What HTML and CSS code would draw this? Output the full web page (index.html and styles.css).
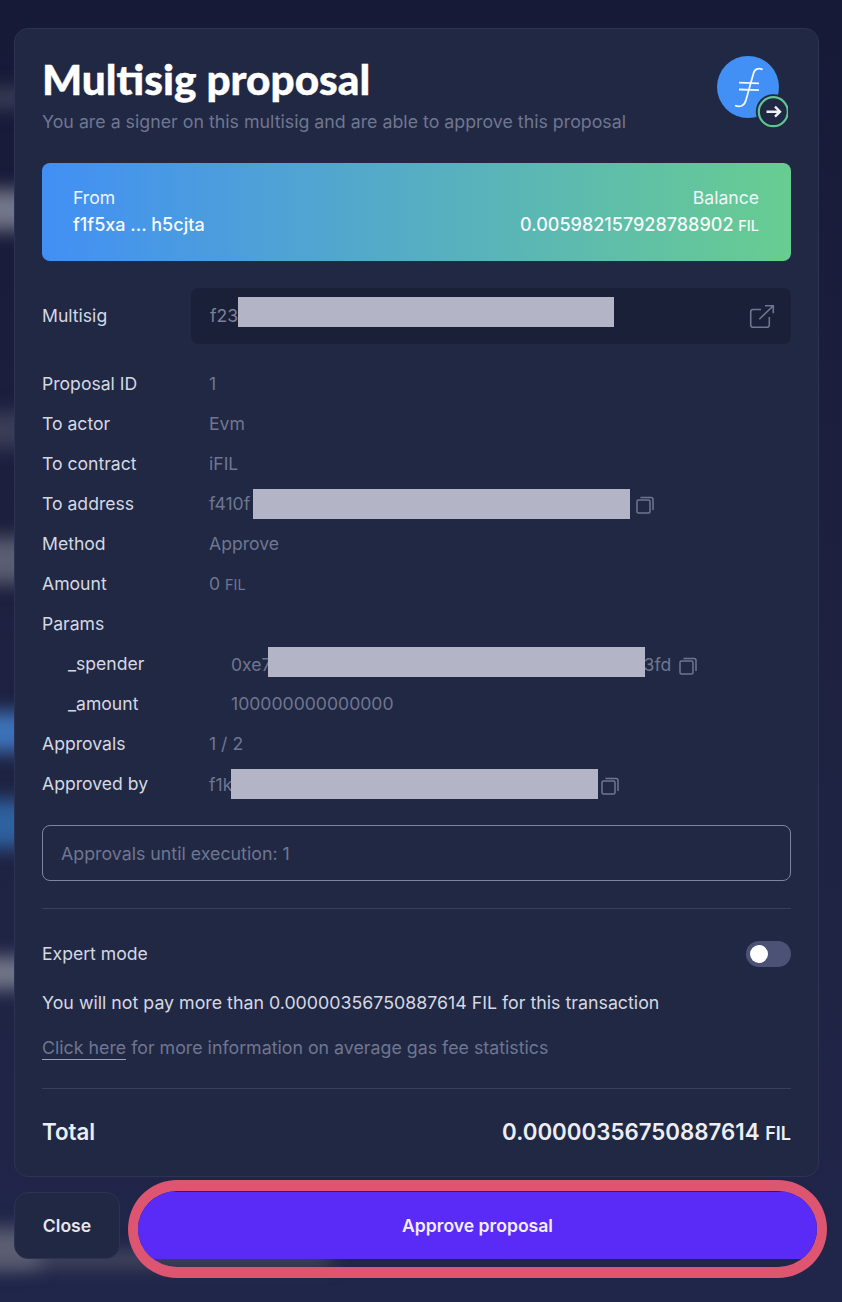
FILE: index.html
```html
<!DOCTYPE html>
<html lang="en">
<head>
    <meta charset="UTF-8">
    <meta name="viewport" content="width=device-width, initial-scale=1.0">
    <title>Multisig proposal</title>
    <link rel="stylesheet" href="styles.css">
</head>
<body>
    <div class="streak streak-a"></div>
    <div class="streak streak-b"></div>
    <div class="streak streak-c"></div>
    <div class="streak streak-d"></div>
    <div class="streak streak-e"></div>
    <div class="streak streak-f"></div>
    <div class="streak streak-g"></div>
    <div class="streak streak-h"></div>
    <div class="streak streak-i"></div>

    <main class="page">
        <section class="card">
            <header class="card-head">
                <div>
                    <h1 class="title">Multisig proposal</h1>
                    <p class="subtitle">You are a signer on this multisig and are able to approve this proposal</p>
                </div>
                <div class="logo">
                    <svg width="72" height="74" viewBox="0 0 72 74">
                        <circle cx="32" cy="31" r="31" fill="#428ff5"/>
                        <path d="M46.7 13.5C42 11.5 38.500 13 37.300 18L30 44C28.500 50 24 51.500 19 49.500" fill="none" stroke="#f2f6fd" stroke-width="1.800"/>
                        <path d="M23 26.700L43 27.300M23 33.500L43 34.200" fill="none" stroke="#f2f6fd" stroke-width="1.800"/>
                        <circle cx="57.300" cy="55.700" r="17.500" fill="#212844"/>
                        <circle cx="57.300" cy="55.700" r="14.500" fill="#212844" stroke="#5ec78f" stroke-width="2.200"/>
                        <path d="M50.500 55.700H64M59 50.700L64 55.700L59 60.700" fill="none" stroke="#eef0f6" stroke-width="2.400"/>
                    </svg>
                </div>
            </header>

            <div class="from-panel">
                <div>
                    <p class="panel-label">From</p>
                    <p class="panel-value">f1f5xa ... h5cjta</p>
                </div>
                <div class="panel-right">
                    <p class="panel-label">Balance</p>
                    <p class="panel-value">0.005982157928788902 <span class="unit">FIL</span></p>
                </div>
            </div>

            <div class="multisig-row">
                <span class="row-label">Multisig</span>
                <div class="multisig-box">
                    <span class="row-value">f23</span>
                    <span class="redact redact-multisig"></span>
                    <svg class="external" width="26" height="26" viewBox="0 0 26 26" fill="none" stroke="#6f7690" stroke-width="1.600">
                        <path d="M12 6.500H4A2.300 2.300 0 0 0 1.700 8.800V22A2.300 2.300 0 0 0 4 24.300H18A2.300 2.300 0 0 0 20.300 22V14"/>
                        <path d="M10.300 16.300L24.300 2.700M16 2.700H24.300V10.300"/>
                    </svg>
                </div>
            </div>

            <dl class="details">
                <div class="detail"><dt>Proposal ID</dt><dd>1</dd></div>
                <div class="detail"><dt>To actor</dt><dd>Evm</dd></div>
                <div class="detail"><dt>To contract</dt><dd>iFIL</dd></div>
                <div class="detail">
                    <dt>To address</dt>
                    <dd class="has-redact">f410f<span class="redact redact-address"></span>
                        <svg class="copy" width="18" height="18" viewBox="0 0 18 18" fill="none" stroke="#6f7690" stroke-width="1.500"><rect x="1" y="4" width="13" height="13" rx="1.500"/><path d="M4.500 1.500H15a2 2 0 0 1 2 2V14"/></svg>
                    </dd>
                </div>
                <div class="detail"><dt>Method</dt><dd>Approve</dd></div>
                <div class="detail"><dt>Amount</dt><dd>0 <span class="unit">FIL</span></dd></div>
                <div class="detail"><dt>Params</dt><dd></dd></div>
                <div class="detail nested">
                    <dt>_spender</dt>
                    <dd class="has-redact">0xe7<span class="redact redact-spender"></span>3fd
                        <svg class="copy copy-spender" width="18" height="18" viewBox="0 0 18 18" fill="none" stroke="#6f7690" stroke-width="1.500"><rect x="1" y="4" width="13" height="13" rx="1.500"/><path d="M4.500 1.500H15a2 2 0 0 1 2 2V14"/></svg>
                    </dd>
                </div>
                <div class="detail nested"><dt>_amount</dt><dd>100000000000000</dd></div>
                <div class="detail"><dt>Approvals</dt><dd>1 / 2</dd></div>
                <div class="detail">
                    <dt>Approved by</dt>
                    <dd class="has-redact">f1k<span class="redact redact-approved"></span>
                        <svg class="copy copy-approved" width="18" height="18" viewBox="0 0 18 18" fill="none" stroke="#6f7690" stroke-width="1.500"><rect x="1" y="4" width="13" height="13" rx="1.500"/><path d="M4.500 1.500H15a2 2 0 0 1 2 2V14"/></svg>
                    </dd>
                </div>
            </dl>

            <div class="notice">Approvals until execution: 1</div>

            <hr class="divider">

            <div class="expert-row">
                <span class="row-label">Expert mode</span>
                <span class="toggle"><span class="knob"></span></span>
            </div>
            <p class="fee-line">You will not pay more than 0.00000356750887614 FIL for this transaction</p>
            <p class="info-line"><a class="info-link" href="#">Click here</a> for more information on average gas fee statistics</p>

            <hr class="divider divider-total">

            <div class="total-row">
                <span>Total</span>
                <span>0.00000356750887614 <span class="unit">FIL</span></span>
            </div>
        </section>

        <div class="actions">
            <button class="btn-close">Close</button>
            <div class="highlight">
                <button class="btn-approve">Approve proposal</button>
            </div>
        </div>
    </main>
</body>
</html>
```

FILE: styles.css
```css
* {
    box-sizing: border-box;
}
body {
    margin: 0;
    height: 1302px;
    overflow: hidden;
    position: relative;
    background: linear-gradient(#161a37, #1e2240 50%, #20264a);
    font-family: Inter, "Liberation Sans", sans-serif;
    font-size: 17.6px;
    color: #e4e6ee;
}
p, h1, dl, dd {
    margin: 0;
}
.streak {
    position: absolute;
    width: 60px;
    left: -20px;
    filter: blur(9px);
}
.streak-a { top: 190px; height: 40px; background: #74768a; }
.streak-b { top: 538px; height: 45px; background: #5b5e72; }
.streak-c { top: 712px; height: 40px; background: #3c72b8; }
.streak-d { top: 800px; height: 48px; background: #2e619f; }
.streak-e { top: 957px; height: 32px; background: #74768a; }
.streak-f { top: 1252px; left: -30px; width: 360px; height: 14px; background: #4c4e63; }
.streak-g { top: 88px; height: 20px; background: #3b3e58; }
.streak-h { top: 412px; height: 36px; background: #3b3e58; }
.streak-i { top: 1228px; height: 40px; background: #5c5e72; }

.page {
    position: relative;
    padding: 28px 23px 0 14px;
}
.card {
    background: #212844;
    border: 1px solid #2c3353;
    border-radius: 14px;
    padding: 27px 27px 0;
    height: 1149px;
}
.card-head {
    display: flex;
    justify-content: space-between;
    height: 107px;
}
.title {
    font-family: Lato, Inter, sans-serif;
    font-weight: 900;
    font-size: 42.300px;
    line-height: 46px;
    color: #fff;
    -webkit-text-stroke: 0.4px #fff;
}
.subtitle {
    margin-top: 8px;
    font-size: 17.800px;
    line-height: 24px;
    color: #6f7690;
}
.logo {
    margin-right: 3px;
    height: 72px;
}
.from-panel {
    display: flex;
    justify-content: space-between;
    height: 98px;
    padding: 23px 32px 0 31px;
    border-radius: 8px;
    background: linear-gradient(90deg, #428ff5, #67cd91);
    color: #eef6fa;
}
.panel-right {
    text-align: right;
}
.panel-label {
    line-height: 24px;
}
.panel-value {
    margin-top: 3px;
    font-size: 18px;
    font-weight: 500;
    line-height: 24px;
    color: #f8fafc;
}
.unit {
    font-size: 14.500px;
}
.multisig-row {
    display: flex;
    align-items: center;
    margin-top: 27px;
}
.row-label {
    padding-bottom: 2px;
    color: #d5d8e3;
}
.multisig-row .row-label {
    width: 149px;
}
.multisig-box {
    flex: 1;
    display: flex;
    align-items: center;
    height: 56px;
    padding: 0 16px 0 19px;
    background: #1a2037;
    border-radius: 8px;
}
.row-value {
    padding-bottom: 2px;
    color: #7b8199;
}
/* blocks pasted over the addresses, they don't sit on the text baseline */
.redact {
    display: inline-block;
    height: 30px;
    background: #b3b5c6;
    vertical-align: middle;
}
.redact-multisig { width: 376px; margin-top: -8px; }
.redact-address { width: 377px; margin-left: 3px; transform: translateY(-1px); }
.redact-spender { width: 377px; margin-left: -4px; margin-right: -1px; transform: translateY(-4px); }
.redact-approved { width: 367px; margin-left: -1px; transform: translateY(-2px); }
.external {
    margin-left: auto;
}
.details {
    margin-top: 19px;
}
.detail {
    display: flex;
    align-items: center;
    height: 40.100px;
}
.detail dt {
    width: 167px;
    color: #d5d8e3;
}
.detail dd {
    color: #6f7690;
}
.detail .has-redact {
    padding-top: 4px;
}
.nested {
    padding-left: 26px;
}
.nested dt {
    width: 163px;
}
.copy {
    margin-left: 1px;
    vertical-align: middle;
}
.copy-spender {
    margin-left: 3px;
}
.copy-approved {
    margin-left: -2px;
}
.notice {
    margin-top: 21px;
    height: 56px;
    padding-left: 18px;
    display: flex;
    align-items: center;
    border: 1px solid #7f859c;
    border-radius: 8px;
    font-size: 17.800px;
    color: #6f7690;
}
.divider {
    margin: 27px 0 0;
    border: none;
    border-top: 1px solid #383f5f;
}
.expert-row {
    display: flex;
    justify-content: space-between;
    align-items: center;
    margin-top: 32px;
    height: 26px;
}
.toggle {
    display: flex;
    align-items: center;
    width: 45px;
    height: 26px;
    padding-left: 4px;
    border-radius: 13px;
    background: #4b5276;
}
.knob {
    width: 18px;
    height: 18px;
    border-radius: 50%;
    background: #fff;
}
.fee-line {
    margin-top: 24px;
    font-size: 17.800px;
    line-height: 24px;
    color: #d5d8e3;
}
.info-line {
    margin-top: 21px;
    font-size: 17.800px;
    line-height: 24px;
    color: #6f7690;
}
.info-link {
    color: #6f7690;
    text-decoration: none;
    border-bottom: 1px solid #9aa0b6;
    padding-bottom: 1px;
}
.divider-total {
    margin-top: 28px;
}
.total-row {
    display: flex;
    justify-content: space-between;
    margin-top: 28px;
    font-size: 22.300px;
    font-weight: 600;
    line-height: 30px;
    color: #eceef4;
}
.total-row .unit {
    font-size: 18px;
}
.actions {
    display: flex;
    align-items: flex-start;
    margin-top: 3px;
}
.btn-close {
    flex: none;
    width: 106px;
    height: 67px;
    margin-top: 12px;
    background: #212844;
    border: 1px solid #2c3353;
    border-radius: 14px;
    color: #e4e6ee;
    font: 600 17.600px Inter, sans-serif;
}
.highlight {
    flex: none;
    margin-left: 8px;
    width: 699px;
    height: 98px;
    padding-top: 1px;
    border: solid #dd5570;
    border-width: 11px 10px;
    border-radius: 50px;
    overflow: hidden;
}
.btn-approve {
    display: block;
    width: 100%;
    height: 67px;
    border: none;
    background: #5a2af7;
    color: #f2effe;
    font: 600 17.600px Inter, sans-serif;
}
```
